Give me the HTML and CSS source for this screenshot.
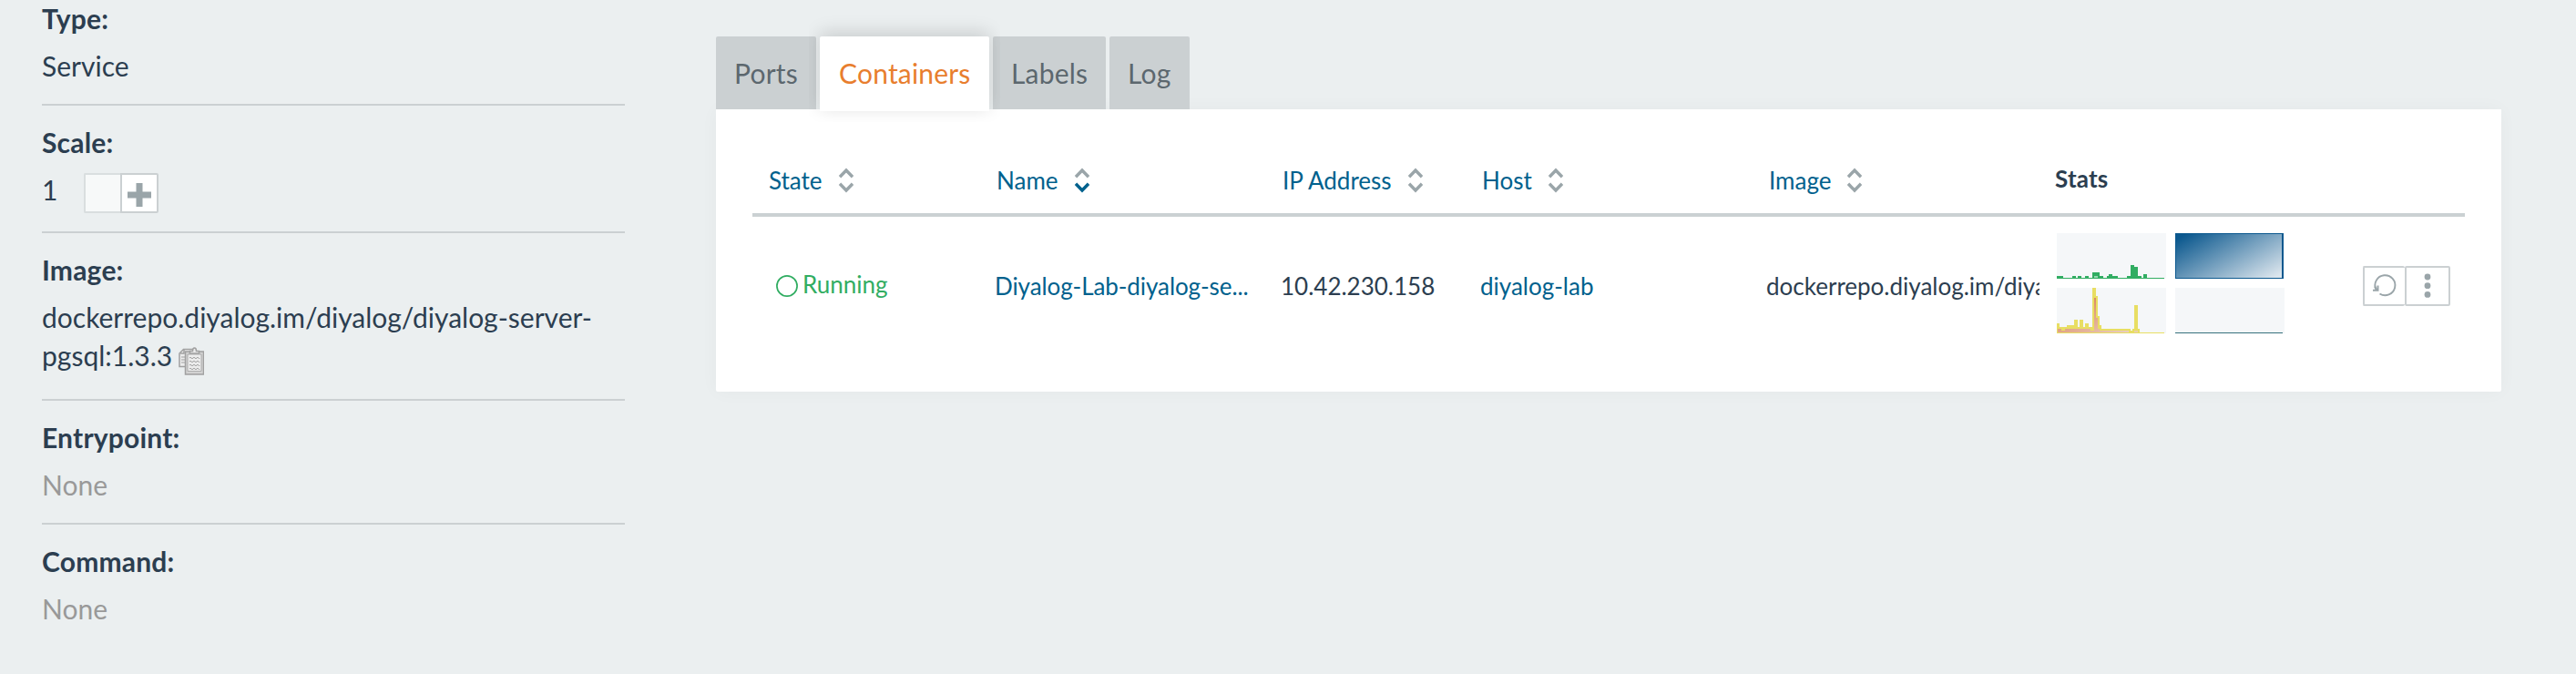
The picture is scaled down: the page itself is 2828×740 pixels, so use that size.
FILE: index.html
```html
<!DOCTYPE html>
<html lang="en">
<head>
<meta charset="utf-8">
<title>Service</title>
<link rel="stylesheet" href="styles.css">
</head>
<body>
<svg class="defs" width="0" height="0">
  <symbol id="up" viewBox="0 0 18 12"><path d="M2 10.2 9 3l7 7.200" fill="none" stroke="currentColor" stroke-width="3.400"/></symbol>
  <symbol id="down" viewBox="0 0 18 12"><path d="M2 1.800 9 9l7-7.200" fill="none" stroke="currentColor" stroke-width="3.400"/></symbol>
</svg>
<div class="page">
  <aside class="sidebar">
    <section class="field"><div class="label">Type:</div><div>Service</div></section>
    <section class="field"><div class="label">Scale:</div>
      <div class="scale"><span>1</span>
        <div class="stepper"><button class="minus" disabled></button><button class="plus"><svg width="26" height="26" viewBox="0 0 26 26"><path d="M0 9.500h9.500V0h7v9.500H26v7h-9.500V26h-7v-9.500H0z" fill="#9aa5a9"/></svg></button></div>
      </div>
    </section>
    <section class="field"><div class="label">Image:</div>
      <div class="image">dockerrepo.diyalog.im/diyalog/diyalog-server-<br>pgsql:1.3.3
        <svg class="clip" width="28" height="31" viewBox="0 0 28 31"><g fill="#ececec" stroke="#a0a0a0" stroke-width="1.500"><path d="M5.500 2.500h13v19H1V7z"/><path d="M2 7h4V3" fill="none"/><path d="M3 11h4M3 14h4M3 17h4" fill="none" stroke-width="1"/><path d="M7.500 5h20v25h-20z" fill="#d2d2d2"/><path d="M10 8h15v18.500H10z" stroke-width=".8"/><path d="M12.500 7V4.500h3q0-3.500 2-3.500t2 3.500h3V7z"/></g><path d="M12 12q1-1.500 2 0t2 0 2 0 2 0 2 0 1 0M12 16q1-1.500 2 0t2 0 2 0 2 0 2 0 1 0M12 20q1-1.500 2 0t2 0 2 0 2 0 2 0 1 0M12 24q1-1.500 2 0t2 0 2 0 2 0 2 0 1 0" fill="none" stroke="#a0a0a0" stroke-width="1"/></svg></div>
    </section>
    <section class="field"><div class="label">Entrypoint:</div><div class="none">None</div></section>
    <section class="field"><div class="label">Command:</div><div class="none">None</div></section>
  </aside>
  <main class="main">
    <nav class="tabs"><a class="tab t1">Ports</a><a class="tab t2 active">Containers</a><a class="tab t3">Labels</a><a class="tab t4">Log</a></nav>
    <div class="panel">
      <div class="row head">
        <div>State<span class="sort"><svg><use href="#up"/></svg><svg><use href="#down"/></svg></span></div>
        <div>Name<span class="sort"><svg><use href="#up"/></svg><svg class="on"><use href="#down"/></svg></span></div>
        <div>IP Address<span class="sort"><svg><use href="#up"/></svg><svg><use href="#down"/></svg></span></div>
        <div>Host<span class="sort"><svg><use href="#up"/></svg><svg><use href="#down"/></svg></span></div>
        <div>Image<span class="sort"><svg><use href="#up"/></svg><svg><use href="#down"/></svg></span></div>
        <div class="stats-title">Stats</div>
      </div>
      <div class="row body">
        <div class="state"><svg width="24" height="24" viewBox="0 0 24 24"><circle cx="12" cy="12" r="11.100" fill="none" stroke="currentColor" stroke-width="1.700"/></svg>Running</div>
        <div class="link name">Diyalog-Lab-diyalog-se...</div>
        <div>10.42.230.158</div>
        <div class="link">diyalog-lab</div>
        <div class="cut">dockerrepo.diyalog.im/diya</div>
        <div class="charts">
          <svg class="chart" width="120" height="50" viewBox="0 0 120 50"><path fill="#31ad62" d="M0 47h7v2h10v-2h4v2h2v-2h4v2h4v-2h4v2h4v-6h8v4h4v2h4v-2h2v-2h4v2h6v2h10v-2h4V35h4v2h4v10h4v2h2v-4h4v4h19v1H0z"/><path fill="#98d7b3" d="M41 47h4v2h-4z"/></svg>
          <svg class="chart" width="120" height="50" viewBox="0 0 120 50"><defs><linearGradient id="mem" gradientUnits="userSpaceOnUse" x1="38" y1="-14" x2="82" y2="64"><stop offset="0" stop-color="#0b588e"/><stop offset="1" stop-color="#dbe5ed"/></linearGradient></defs><path fill="#fff" d="M119 0h1v50h-1z"/><path fill="#0b588e" d="M0 0h119v50H0z"/><path fill="url(#mem)" d="M1 1h116v48H1z"/></svg>
          <svg class="chart" width="120" height="50" viewBox="0 0 120 50"><defs><linearGradient id="net" gradientUnits="userSpaceOnUse" x1="30" y1="0" x2="55" y2="60"><stop offset="0" stop-color="#d97549"/><stop offset="1" stop-color="#ead0c2"/></linearGradient></defs><path fill="#e8de63" d="M0 39h3v4h8v-2h8v-6h4v8h2v-8h4v8h2v-4h4v4h4V0h4v9h2v22h2v10h2v4h32v2h2v-2h2V19h4v26h2v4h27v1H0z"/><path fill="url(#net)" d="M1 45h4v2h4v-2h28v2h4V11h2v22h2v12h2v2h32v2H1z"/><path fill="#ecd0a6" d="M85 47h4v2h-4z"/></svg>
          <svg class="chart" width="120" height="50" viewBox="0 0 120 50"><path fill="#36717c" d="M0 49h118v1H0z"/></svg>
        </div>
        <div class="actions"><button><svg width="28" height="28" viewBox="0 0 28 28"><path d="M4.500 18A11 11 0 1 1 8.500 22.500" fill="none" stroke="#9aa5a9" stroke-width="1.900"/><path d="M1 18.800h5.500v-5.300" fill="none" stroke="#9aa5a9" stroke-width="2"/><path d="m3 14.500 3 4" stroke="#9aa5a9" stroke-width="2"/></svg></button><button><svg width="8" height="28" viewBox="0 0 8 28"><g fill="#9aa5a9"><circle cx="4" cy="4" r="3.400"/><circle cx="4" cy="13.700" r="3.400"/><circle cx="4" cy="23.400" r="3.400"/></g></svg></button></div>
      </div>
    </div>
  </main>
</div>
</body>
</html>
```
FILE: styles.css
```css
* { box-sizing: border-box; }
html, body { height: 740px; overflow: hidden; }
body { margin: 0; background: #ebeff0; color: #2c3e50; font: 30px/42px Lato, sans-serif; }
.defs { position: absolute; }
.page { display: flex; height: 740px; overflow: hidden; }
.sidebar { width: 640px; margin-left: 46px; flex: none; }
.field { padding-bottom: 21px; margin-bottom: 19px; border-bottom: 2px solid #cbd0d2; }
.field:first-child { margin-top: -1px; }
.field:last-child { border: 0; }
.label { font-weight: 700; margin-bottom: 10px; letter-spacing: .2px; }
.none { color: #999; }
.scale { display: flex; height: 46px; }
.stepper { display: flex; height: 44px; margin: 3px 0 0 29px; }
button { font: inherit; padding: 0; border: 2px solid #cbd0d2; background: #fff; display: flex; align-items: center; justify-content: center; }
.minus { width: 40px; border-right-width: 0; border-radius: 2px 0 0 2px; background: #f7f9f9; border-color: #d9dedf; }
.plus { width: 42px; border-radius: 0 2px 2px 0; padding-top: 3px; }
.image { height: 90px; white-space: nowrap; }
.clip { vertical-align: -10px; margin-left: -1px; }
.main { width: 1960px; margin-left: 100px; padding-top: 40px; }
.tabs { display: flex; gap: 4px; height: 80px; }
.tab { height: 80px; padding-left: 20px; line-height: 80px; background: #cbd0d2; color: #5c676e; border-radius: 2px 2px 0 0; letter-spacing: .2px; }
.t1 { width: 110px; }
.t2 { width: 186px; }
.t3 { width: 124px; }
.t4 { width: 88px; }
.active { height: 82px; padding-left: 21px; background: #fff; color: #e87e2e; position: relative; z-index: 1; box-shadow: 0 -4px 20px rgba(0,0,0,.15); clip-path: inset(-30px -12px -12px -12px); }
.panel { height: 310px; padding: 40px; background: #fff; border-radius: 0 0 2px 2px; box-shadow: 0 0 20px rgba(0,0,0,.035); }
.row { display: grid; grid-template-columns: 248px 314px 219px 314px 314px 336px 135px; padding-left: 18px; font-size: 26px; line-height: 36px; }
.row > * { white-space: nowrap; }
.head { height: 78px; padding-top: 20px; border-bottom: 4px solid #cbd1d3; color: #00618d; }
.head > div { display: flex; }
.head > div:nth-child(n+2) { padding-left: 2px; }
.head > div:nth-child(n+5) { padding-left: 3px; }
.sort { display: flex; flex-direction: column; width: 18px; height: 28px; margin: 4px 0 0 17px; justify-content: space-between; color: #9aa5a9; }
.sort svg { width: 18px; height: 12px; }
.sort .on { color: #00618d; }
.head .stats-title { color: #2c3e50; font-weight: 700; margin-top: -2px; letter-spacing: .2px; }
.body { height: 152px; padding-top: 58px; }
.state { display: flex; gap: 5px; padding-left: 8px; color: #31ad62; margin-top: -2px; }
.state svg { margin-top: 8px; }
.link { color: #00618d; }
.name { letter-spacing: -.08px; }
.cut { width: 300px; overflow: hidden; }
.charts { display: grid; grid-template-columns: 120px 120px; gap: 10px; margin: -40px 0 0 5px; height: 110px; }
.chart { display: block; background: #f5f7f9; }
.actions { display: flex; width: 96px; height: 44px; margin-top: -4px; margin-left: 5px; }
.actions button { width: 48px; border-radius: 2px; }
.actions button:first-child { border-right: 0; width: 46px; }
.actions button:last-child { width: 50px; }
```
